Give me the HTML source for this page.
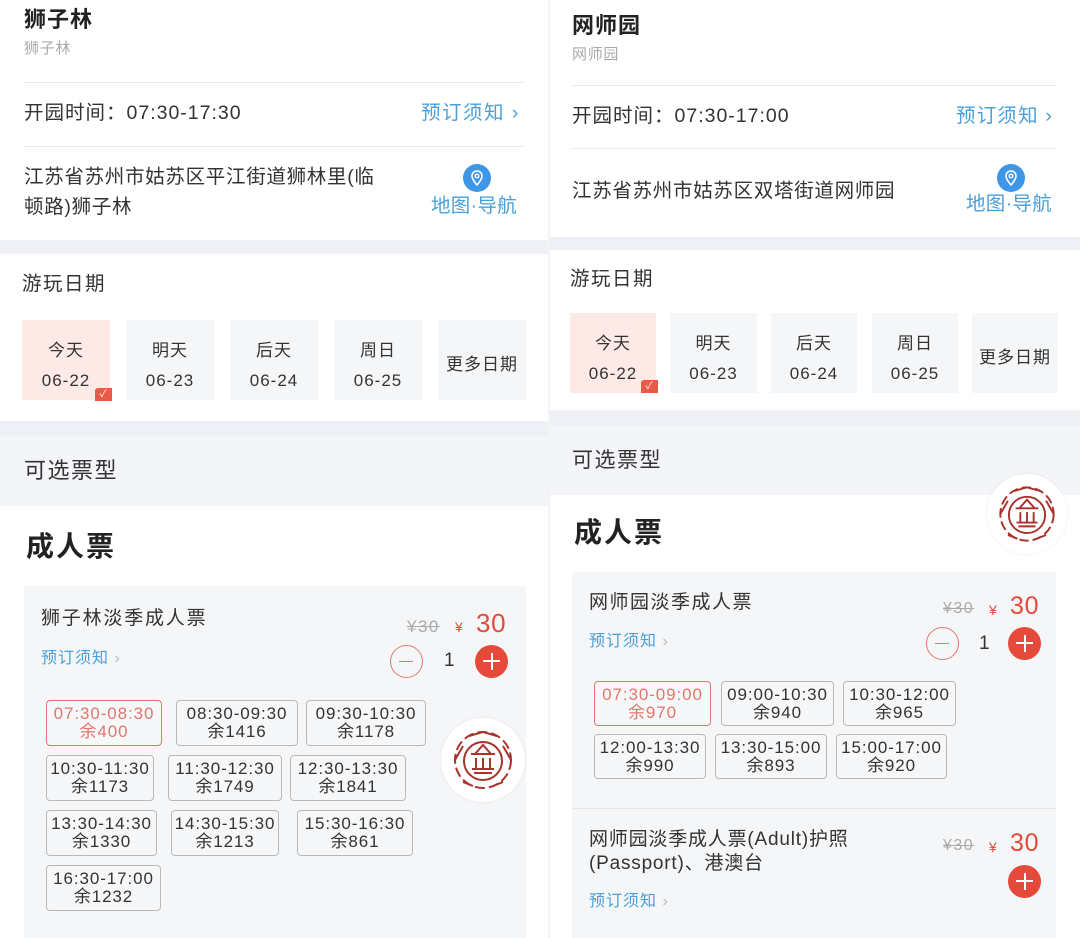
<!DOCTYPE html>
<html><head><meta charset="utf-8"><style>
*{margin:0;padding:0;box-sizing:border-box}
body{width:1080px;height:938px;position:relative;overflow:hidden;background:#fff;font-family:"Liberation Sans","Noto Sans CJK SC",sans-serif;color:#333;letter-spacing:0.7px}
.a{position:absolute}
.t{position:absolute;white-space:nowrap;line-height:1}
.band{position:absolute;background:#eef0f5}
.line{position:absolute;height:1px;background:#ececec}
.blue{color:#4a9fd8}
.db{position:absolute;background:#f5f6f8;text-align:center;font-size:17px;color:#333;letter-spacing:1px}
.db.sel{background:#fde9e6}
.db span{display:block}
.slot{position:absolute;border:1.5px solid #b9b9b9;border-radius:4px;text-align:center;font-size:17px;line-height:18px;color:#333;padding-top:4px;background:#f6f7f9;letter-spacing:0.9px}
.slot.sel{border-color:#e0776a;color:#e0776a}
.card{position:absolute;background:#f5f6f8}
.red{color:#e14b3b}
.strike{color:#aaa;text-decoration:line-through}
.pin{position:absolute;width:28px;height:28px;border-radius:50%;background:#3d97e6}
.logo{position:absolute;border-radius:50%;background:#fff;box-shadow:0 0 3px rgba(0,0,0,.08)}
</style></head><body>

<!-- LEFT PANEL -->
<div class="t" style="left:24px;top:9px;font-size:22px;font-weight:bold;color:#222;letter-spacing:1px">狮子林</div>
<div class="t" style="left:24px;top:41px;font-size:15px;color:#aaa">狮子林</div>
<div class="line" style="left:24px;top:82px;width:500px"></div>
<div class="t" style="left:24px;top:104px;font-size:19.5px;letter-spacing:1px">开园时间：07:30-17:30</div>
<div class="t blue" style="left:421px;top:104px;font-size:19.5px;letter-spacing:1.5px">预订须知 ›</div>
<div class="line" style="left:24px;top:146px;width:500px"></div>
<div class="t" style="left:24px;top:168px;font-size:19.5px">江苏省苏州市姑苏区平江街道狮林里(临</div>
<div class="t" style="left:24px;top:198px;font-size:19.5px">顿路)狮子林</div>
<div class="pin" style="left:463px;top:164px"><svg width="28" height="28" viewBox="0 0 28 28"><path d="M14 7c-3 0-5 2.2-5 5 0 3.5 5 9 5 9s5-5.5 5-9c0-2.8-2-5-5-5z" fill="none" stroke="#fff" stroke-width="1.6"/><circle cx="14" cy="12" r="1.8" fill="none" stroke="#fff" stroke-width="1.4"/></svg></div>
<div class="t blue" style="left:431px;top:197px;font-size:19.5px;letter-spacing:0.3px">地图·导航</div>
<div class="band" style="left:0;top:240px;width:548px;height:14px"></div>
<div class="t" style="left:22px;top:275px;font-size:19.5px;letter-spacing:1.5px">游玩日期</div>
<div class="db sel" style="left:22px;top:320px;width:88px;height:80px"><span style="margin-top:16px">今天</span><span style="margin-top:10px">06-22</span></div>
<div class="a" style="left:95px;top:388px;width:17px;height:13px;background:#e85a48;border-radius:3px 0 0 0;color:#fff;font-size:10px;text-align:center;line-height:13px">✓</div>
<div class="db" style="left:126px;top:320px;width:88px;height:80px"><span style="margin-top:16px">明天</span><span style="margin-top:10px">06-23</span></div>
<div class="db" style="left:230px;top:320px;width:88px;height:80px"><span style="margin-top:16px">后天</span><span style="margin-top:10px">06-24</span></div>
<div class="db" style="left:334px;top:320px;width:88px;height:80px"><span style="margin-top:16px">周日</span><span style="margin-top:10px">06-25</span></div>
<div class="db" style="left:438px;top:320px;width:88px;height:80px"><span style="margin-top:30px">更多日期</span></div>
<div class="band" style="left:0;top:421px;width:548px;height:15px"></div>
<div class="a" style="left:0;top:436px;width:548px;height:70px;background:#f4f5f8"></div>
<div class="t" style="left:24px;top:460px;font-size:22px;letter-spacing:1.5px">可选票型</div>
<div class="t" style="left:26px;top:533px;font-size:28px;font-weight:bold;color:#222;letter-spacing:2px">成人票</div>

<div class="card" style="left:24px;top:586px;width:502px;height:352px"></div>
<div class="t" style="left:41px;top:609px;font-size:19px;letter-spacing:1.8px">狮子林淡季成人票</div>
<div class="t strike" style="left:407px;top:618px;font-size:17px;letter-spacing:1.5px">¥30</div>
<div class="t red" style="left:455px;top:620px;font-size:14px">¥</div>
<div class="t red" style="left:476px;top:610px;font-size:26px">30</div>
<div class="t blue" style="left:41px;top:651px;font-size:16px;letter-spacing:1px">预订须知 <span style="color:#bbb">›</span></div>
<div class="a" style="left:390px;top:645px;width:33px;height:33px;border:1.5px solid #e07a6e;border-radius:50%"><div class="a" style="left:8px;top:14.5px;width:14px;height:1.5px;background:#e07a6e"></div></div>
<div class="t" style="left:444px;top:651px;font-size:19px">1</div>
<div class="a" style="left:475px;top:645px;width:33px;height:33px;background:#e5493a;border-radius:50%"><div class="a" style="left:8px;top:15px;width:17px;height:2px;background:#fff"></div><div class="a" style="left:15.5px;top:8px;width:2px;height:17px;background:#fff"></div></div>

<div class="slot sel" style="left:46px;top:700px;width:116px;height:46px">07:30-08:30<br>余400</div>
<div class="slot" style="left:176px;top:700px;width:122px;height:46px">08:30-09:30<br>余1416</div>
<div class="slot" style="left:306px;top:700px;width:120px;height:46px">09:30-10:30<br>余1178</div>
<div class="slot" style="left:46px;top:755px;width:108px;height:46px">10:30-11:30<br>余1173</div>
<div class="slot" style="left:168px;top:755px;width:114px;height:46px">11:30-12:30<br>余1749</div>
<div class="slot" style="left:290px;top:755px;width:116px;height:46px">12:30-13:30<br>余1841</div>
<div class="slot" style="left:46px;top:810px;width:111px;height:46px">13:30-14:30<br>余1330</div>
<div class="slot" style="left:171px;top:810px;width:108px;height:46px">14:30-15:30<br>余1213</div>
<div class="slot" style="left:297px;top:810px;width:116px;height:46px">15:30-16:30<br>余861</div>
<div class="slot" style="left:46px;top:865px;width:115px;height:46px">16:30-17:00<br>余1232</div>

<div class="logo" style="left:441px;top:718px;width:84px;height:84px">
<svg width="84" height="84" viewBox="0 0 84 84" fill="none" stroke="#a8322c" stroke-width="2"><circle cx="42" cy="42" r="28" stroke-dasharray="10 4"/><circle cx="42" cy="43" r="19"/><path d="M30 36h24M34 36l8-9 8 9M35 40v10M42 40v10M49 40v10M31 51h22M33 55h18"/><path d="M14 42l8-14M62 28l8 14M22 64l10 4M52 68l10-4M28 18l14-4 14 4"/></svg></div>

<div class="a" style="left:548px;top:0;width:2px;height:938px;background:#f2f3f6"></div>

<!-- RIGHT PANEL -->
<div class="t" style="left:572px;top:15px;font-size:22px;font-weight:bold;color:#222;letter-spacing:1px">网师园</div>
<div class="t" style="left:572px;top:47px;font-size:15px;color:#aaa">网师园</div>
<div class="line" style="left:572px;top:85px;width:484px"></div>
<div class="t" style="left:572px;top:107px;font-size:19.5px;letter-spacing:1px">开园时间：07:30-17:00</div>
<div class="t blue" style="left:956px;top:107px;font-size:19.5px;letter-spacing:1.2px">预订须知 ›</div>
<div class="line" style="left:572px;top:148px;width:484px"></div>
<div class="t" style="left:572px;top:182px;font-size:19.5px">江苏省苏州市姑苏区双塔街道网师园</div>
<div class="pin" style="left:997px;top:164px"><svg width="28" height="28" viewBox="0 0 28 28"><path d="M14 7c-3 0-5 2.2-5 5 0 3.5 5 9 5 9s5-5.5 5-9c0-2.8-2-5-5-5z" fill="none" stroke="#fff" stroke-width="1.6"/><circle cx="14" cy="12" r="1.8" fill="none" stroke="#fff" stroke-width="1.4"/></svg></div>
<div class="t blue" style="left:966px;top:195px;font-size:19.5px;letter-spacing:0.3px">地图·导航</div>
<div class="band" style="left:550px;top:237px;width:530px;height:13px"></div>
<div class="t" style="left:570px;top:270px;font-size:19.5px;letter-spacing:1.5px">游玩日期</div>
<div class="db sel" style="left:570px;top:313px;width:86px;height:80px"><span style="margin-top:16px">今天</span><span style="margin-top:10px">06-22</span></div>
<div class="a" style="left:641px;top:380px;width:17px;height:13px;background:#e85a48;border-radius:3px 0 0 0;color:#fff;font-size:10px;text-align:center;line-height:13px">✓</div>
<div class="db" style="left:670px;top:313px;width:87px;height:80px"><span style="margin-top:16px">明天</span><span style="margin-top:10px">06-23</span></div>
<div class="db" style="left:771px;top:313px;width:86px;height:80px"><span style="margin-top:16px">后天</span><span style="margin-top:10px">06-24</span></div>
<div class="db" style="left:872px;top:313px;width:86px;height:80px"><span style="margin-top:16px">周日</span><span style="margin-top:10px">06-25</span></div>
<div class="db" style="left:972px;top:313px;width:86px;height:80px"><span style="margin-top:30px">更多日期</span></div>
<div class="band" style="left:550px;top:410px;width:530px;height:15px"></div>
<div class="a" style="left:550px;top:425px;width:530px;height:70px;background:#f4f5f8"></div>
<div class="t" style="left:572px;top:450px;font-size:21px;letter-spacing:1.5px">可选票型</div>
<div class="t" style="left:574px;top:519px;font-size:28px;font-weight:bold;color:#222;letter-spacing:2px">成人票</div>
<div class="logo" style="left:987px;top:474px;width:80px;height:80px">
<svg width="80" height="80" viewBox="0 0 84 84" fill="none" stroke="#a8322c" stroke-width="2"><circle cx="42" cy="42" r="28" stroke-dasharray="10 4"/><circle cx="42" cy="43" r="19"/><path d="M30 36h24M34 36l8-9 8 9M35 40v10M42 40v10M49 40v10M31 51h22M33 55h18"/><path d="M14 42l8-14M62 28l8 14M22 64l10 4M52 68l10-4M28 18l14-4 14 4"/></svg></div>

<div class="card" style="left:572px;top:572px;width:484px;height:366px"></div>
<div class="t" style="left:589px;top:593px;font-size:19px;letter-spacing:1.5px">网师园淡季成人票</div>
<div class="t strike" style="left:943px;top:601px;font-size:16px;letter-spacing:1.5px">¥30</div>
<div class="t red" style="left:989px;top:603px;font-size:14px">¥</div>
<div class="t red" style="left:1010px;top:594px;font-size:25px">30</div>
<div class="t blue" style="left:589px;top:634px;font-size:16px;letter-spacing:1px">预订须知 <span style="color:#bbb">›</span></div>
<div class="a" style="left:926px;top:627px;width:33px;height:33px;border:1.5px solid #e07a6e;border-radius:50%"><div class="a" style="left:8px;top:14.5px;width:14px;height:1.5px;background:#e07a6e"></div></div>
<div class="t" style="left:979px;top:634px;font-size:19px">1</div>
<div class="a" style="left:1008px;top:627px;width:33px;height:33px;background:#e5493a;border-radius:50%"><div class="a" style="left:8px;top:15px;width:17px;height:2px;background:#fff"></div><div class="a" style="left:15.5px;top:8px;width:2px;height:17px;background:#fff"></div></div>

<div class="slot sel" style="left:594px;top:681px;width:117px;height:45px">07:30-09:00<br>余970</div>
<div class="slot" style="left:721px;top:681px;width:113px;height:45px">09:00-10:30<br>余940</div>
<div class="slot" style="left:843px;top:681px;width:113px;height:45px">10:30-12:00<br>余965</div>
<div class="slot" style="left:594px;top:734px;width:112px;height:45px">12:00-13:30<br>余990</div>
<div class="slot" style="left:715px;top:734px;width:112px;height:45px">13:30-15:00<br>余893</div>
<div class="slot" style="left:836px;top:734px;width:111px;height:45px">15:00-17:00<br>余920</div>

<div class="a" style="left:572px;top:808px;width:484px;height:1px;background:#e6e6e6"></div>
<div class="t" style="left:589px;top:830px;font-size:19px;letter-spacing:0.8px">网师园淡季成人票(Adult)护照</div>
<div class="t" style="left:589px;top:854px;font-size:19px;letter-spacing:0.8px">(Passport)、港澳台</div>
<div class="t strike" style="left:943px;top:838px;font-size:16px;letter-spacing:1.5px">¥30</div>
<div class="t red" style="left:989px;top:840px;font-size:14px">¥</div>
<div class="t red" style="left:1010px;top:831px;font-size:25px">30</div>
<div class="a" style="left:1008px;top:865px;width:33px;height:33px;background:#e5493a;border-radius:50%"><div class="a" style="left:8px;top:15px;width:17px;height:2px;background:#fff"></div><div class="a" style="left:15.5px;top:8px;width:2px;height:17px;background:#fff"></div></div>
<div class="t blue" style="left:589px;top:894px;font-size:16px;letter-spacing:1px">预订须知 <span style="color:#bbb">›</span></div>

</body></html>
